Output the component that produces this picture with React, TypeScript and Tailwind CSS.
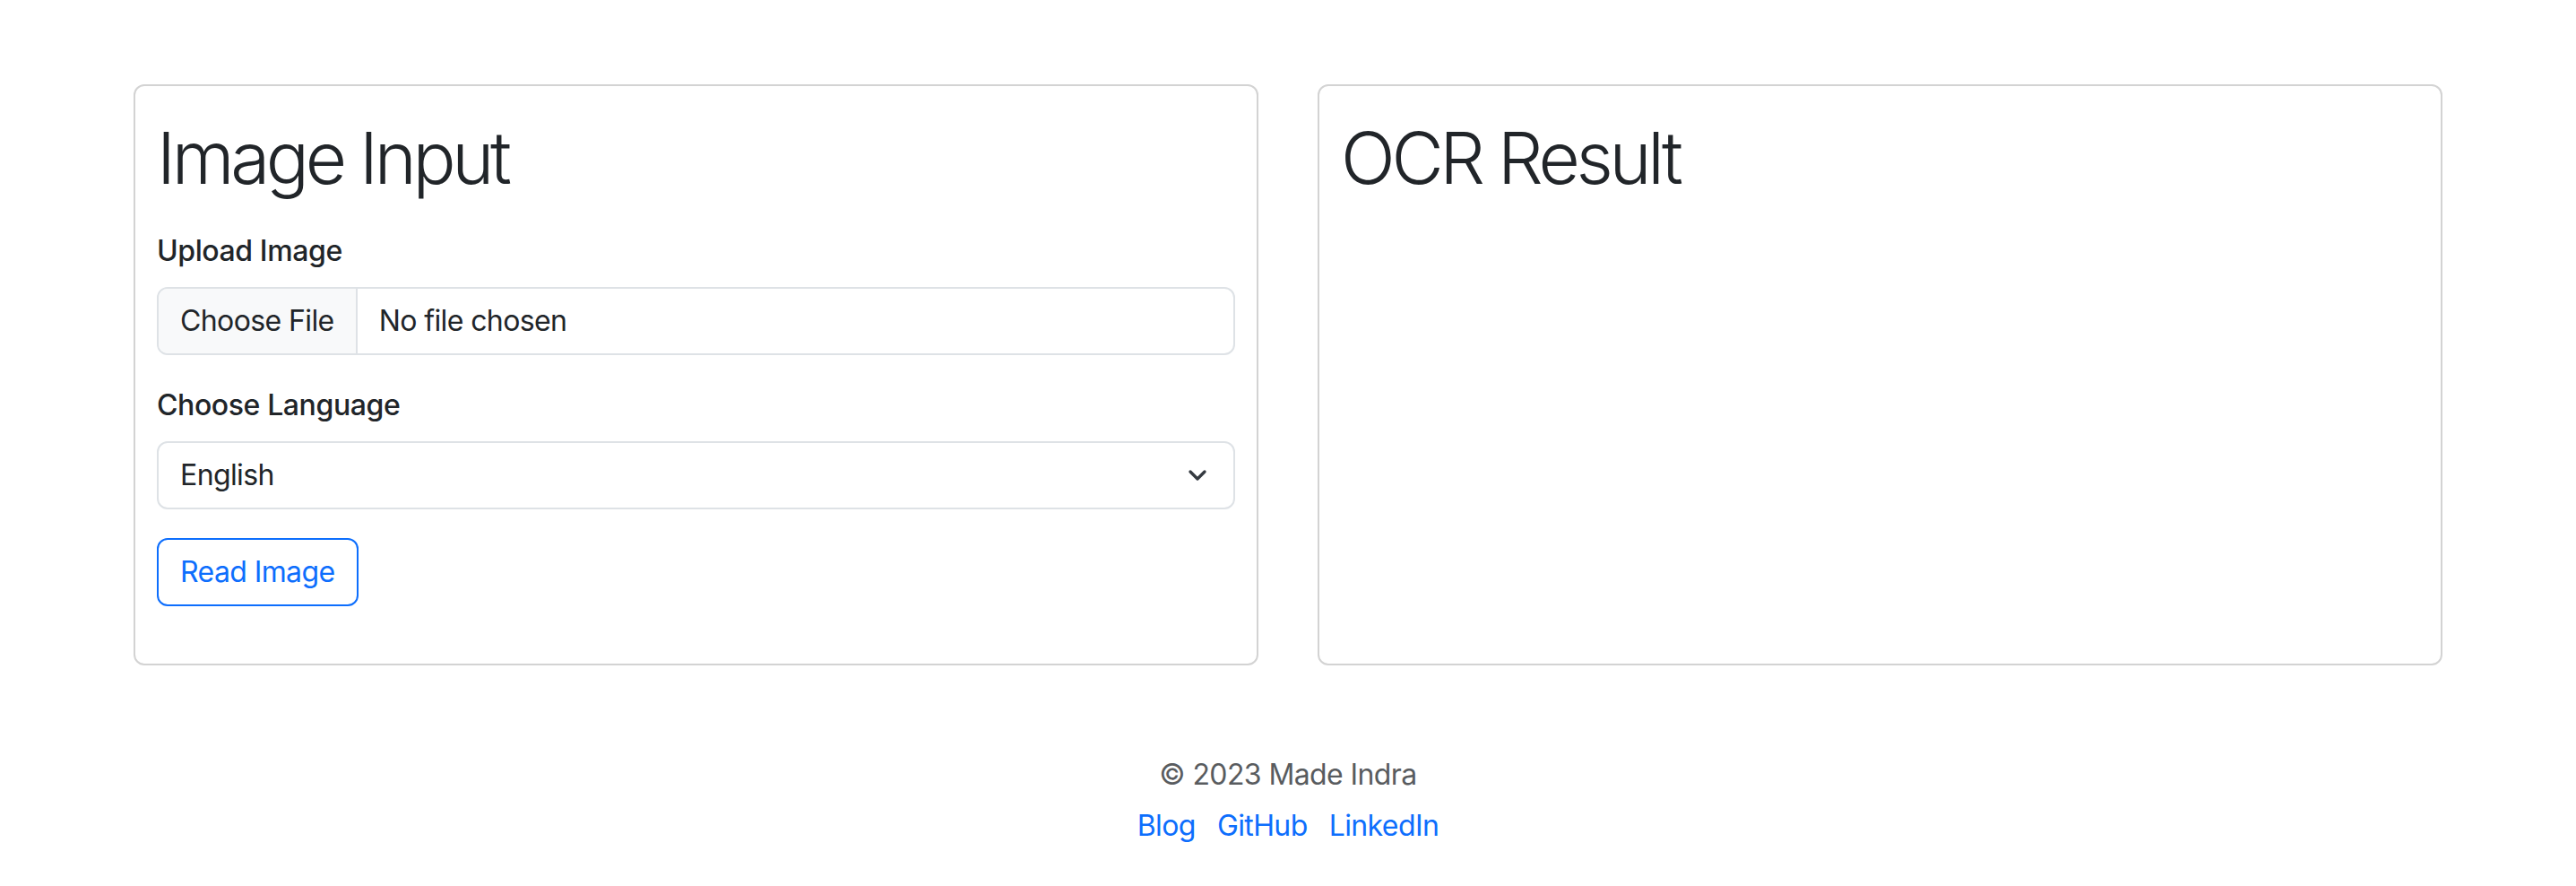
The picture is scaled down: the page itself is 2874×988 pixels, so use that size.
import { ChevronDown } from 'lucide-react'

function Field({ label, children }: { label: string; children: React.ReactNode }) {
  return (
    <div className="mb-8">
      <div className="mb-4 text-[32px] leading-[48px] font-medium tracking-[-0.4px] text-[#212529]">{label}</div>
      {children}
    </div>
  )
}

export default function App() {
  return (
    <div className="min-h-[988px] bg-white text-[#212529] tracking-[-0.6px]" style={{ fontFamily: 'Inter, "Open Sans", sans-serif' }}>
      <main className="mx-auto w-[2576px] pt-[94px]">
        <div className="grid grid-cols-2 gap-[66px]">
          {/* left card: input form */}
          <section className="rounded-[12px] border-2 border-[#d3d3d3] px-6 pt-8 pb-8">
            <h1 className="mb-8 text-[80px] leading-[96px] font-light tracking-[-4.3px]">Image Input</h1>

            <Field label="Upload Image">
              <div className="flex h-[76px] overflow-hidden rounded-[12px] border-2 border-[#dee2e6] text-[32px]">
                <div className="flex items-center border-r-2 border-[#dee2e6] bg-[#f8f9fa] px-6">Choose File</div>
                <div className="flex items-center px-6">No file chosen</div>
              </div>
            </Field>

            <Field label="Choose Language">
              <div className="flex h-[76px] items-center justify-between rounded-[12px] border-2 border-[#dee2e6] pr-6 pl-6 text-[32px]">
                <span>English</span>
                <ChevronDown className="h-8 w-8 text-[#343a40]" strokeWidth={2.5} />
              </div>
            </Field>

            <button className="mb-8 rounded-[12px] border-2 border-[#0d6efd] px-6 py-3 text-[32px] leading-[48px] text-[#0d6efd]">
              Read Image
            </button>
          </section>

          {/* right card: result */}
          <section className="rounded-[12px] border-2 border-[#d3d3d3] px-6 pt-8 pb-8">
            <h1 className="text-[80px] leading-[96px] font-light tracking-[-4.3px]">OCR Result</h1>
          </section>
        </div>
      </main>

      <footer className="mt-[98px] flex flex-col items-center">
        <p className="text-[32px] leading-[48px] text-[#595c5f]">© 2023 Made Indra</p>
        <div className="mt-[9px] flex gap-[24px] text-[32px] leading-[48px] text-[#0d6efd]">
          <a href="#">Blog</a>
          <a href="#">GitHub</a>
          <a href="#">LinkedIn</a>
        </div>
      </footer>
    </div>
  )
}
